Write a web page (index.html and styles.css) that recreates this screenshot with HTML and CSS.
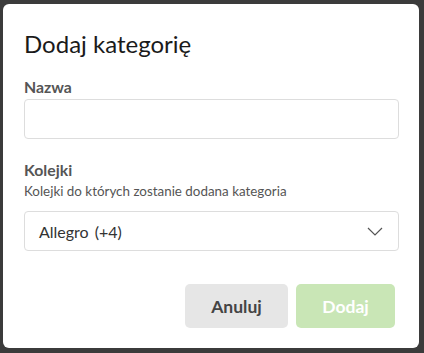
FILE: index.html
```html
<!DOCTYPE html>
<html>
<head>
    <meta charset="utf-8">
    <title>Dodaj kategorię</title>
    <link rel="stylesheet" href="styles.css">
</head>
<body>
    <div class="modal">
        <h2 class="modal-title">Dodaj kategorię</h2>

        <div class="field">
            <label for="name">Nazwa</label>
            <input type="text" id="name">
        </div>

        <div class="field">
            <label>Kolejki</label>
            <div class="hint">Kolejki do których zostanie dodana kategoria</div>
            <div class="select">
                <span>Allegro</span><span class="more">(+4)</span>
                <svg class="chevron" width="16" height="9" viewBox="0 0 16 9">
                    <path d="M1 1 L8 8 L15 1" fill="none" stroke="#555" stroke-width="1.2"/>
                </svg>
            </div>
        </div>

        <div class="footer">
            <button class="btn btn-cancel">Anuluj</button>
            <button class="btn btn-primary" disabled>Dodaj</button>
        </div>
    </div>
</body>
</html>
```

FILE: styles.css
```css
body {
    margin: 0;
    padding: 4px 0 0 3px;
    background-color: #3b3b3b;
    font-family: Lato, "Open Sans", sans-serif;
    height: 353px;
    box-sizing: border-box;
    overflow: hidden;
}
.modal {
    width: 416px;
    height: 344px;
    box-sizing: border-box;
    background-color: #fff;
    border-radius: 6px;
    padding: 25px 20px 20px 21px;
}
.modal-title {
    margin: 0 0 19px 0;
    font-size: 24px;
    line-height: 29px;
    font-weight: 400;
    color: #1a1a1a;
}
.field {
    margin-bottom: 21px;
}
label {
    display: block;
    font-size: 15.8px;
    line-height: 19px;
    font-weight: 700;
    color: #555;
    margin-bottom: 3px;
}
.hint {
    font-size: 13.4px;
    line-height: 16px;
    color: #555;
    margin: 4px 0 12px 0;
}
input {
    display: block;
    width: 100%;
    height: 40px;
    box-sizing: border-box;
    border: 1px solid #ddd;
    border-radius: 4px;
    font-family: inherit;
    font-size: 16px;
    padding: 0 14px;
    margin: 0;
}
.select {
    display: flex;
    align-items: center;
    height: 40px;
    box-sizing: border-box;
    border: 1px solid #ddd;
    border-radius: 4px;
    padding: 0 15px 0 14px;
    font-size: 16px;
    color: #333;
}
.select .more {
    margin-left: 6px;
}
.chevron {
    margin-left: auto;
}
.footer {
    display: flex;
    justify-content: flex-end;
    gap: 8px;
    padding-right: 4px;
    margin-top: 33px;
}
.btn {
    height: 44px;
    border: none;
    border-radius: 5px;
    font-family: inherit;
    font-size: 17.5px;
    font-weight: 700;
    cursor: pointer;
}
.btn-cancel {
    width: 103px;
    background-color: #e6e6e6;
    color: #444;
}
.btn-primary {
    width: 99px;
    background-color: #c9e6b6;
    color: #fff;
}
```
